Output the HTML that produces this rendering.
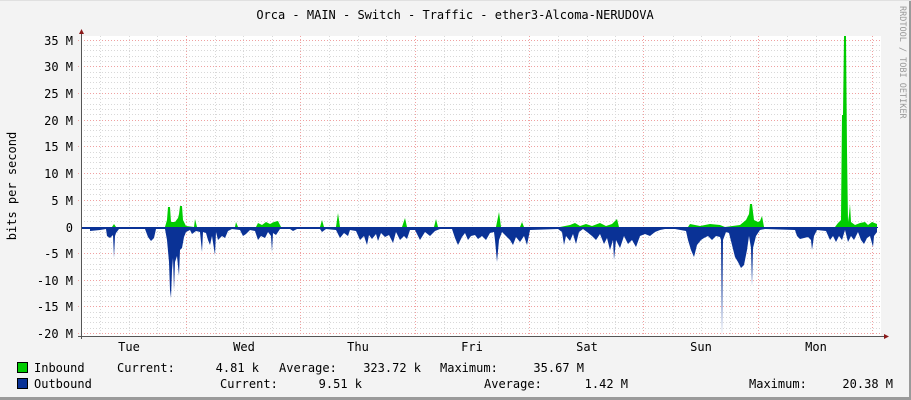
<!DOCTYPE html>
<html><head><meta charset="utf-8"><style>
html,body{margin:0;padding:0;background:#f3f3f3}
svg{display:block}
text{font-family:"DejaVu Sans Mono","Liberation Mono",monospace;fill:#000}
</style></head><body>
<svg width="911" height="400" xmlns="http://www.w3.org/2000/svg">
<rect width="911" height="400" fill="#f3f3f3"/>
<rect x="909" y="0" width="2" height="400" fill="#9a9a9a"/>
<rect x="0" y="397" width="911" height="3" fill="#9a9a9a"/>
<rect x="0" y="0" width="911" height="1" fill="#e0e0e0"/>
<rect x="81" y="36" width="800" height="300" fill="#fff"/>
<g stroke="#d8d8d8" stroke-width="1" stroke-dasharray="1,2">
<line x1="81" x2="881" y1="45.5" y2="45.5"/><line x1="81" x2="881" y1="50.5" y2="50.5"/><line x1="81" x2="881" y1="56.5" y2="56.5"/><line x1="81" x2="881" y1="61.5" y2="61.5"/>
<line x1="81" x2="881" y1="72.5" y2="72.5"/><line x1="81" x2="881" y1="77.5" y2="77.5"/><line x1="81" x2="881" y1="82.5" y2="82.5"/><line x1="81" x2="881" y1="88.5" y2="88.5"/>
<line x1="81" x2="881" y1="98.5" y2="98.5"/><line x1="81" x2="881" y1="104.5" y2="104.5"/><line x1="81" x2="881" y1="109.5" y2="109.5"/><line x1="81" x2="881" y1="114.5" y2="114.5"/>
<line x1="81" x2="881" y1="125.5" y2="125.5"/><line x1="81" x2="881" y1="130.5" y2="130.5"/><line x1="81" x2="881" y1="136.5" y2="136.5"/><line x1="81" x2="881" y1="141.5" y2="141.5"/>
<line x1="81" x2="881" y1="152.5" y2="152.5"/><line x1="81" x2="881" y1="157.5" y2="157.5"/><line x1="81" x2="881" y1="162.5" y2="162.5"/><line x1="81" x2="881" y1="168.5" y2="168.5"/>
<line x1="81" x2="881" y1="178.5" y2="178.5"/><line x1="81" x2="881" y1="184.5" y2="184.5"/><line x1="81" x2="881" y1="189.5" y2="189.5"/><line x1="81" x2="881" y1="194.5" y2="194.5"/>
<line x1="81" x2="881" y1="205.5" y2="205.5"/><line x1="81" x2="881" y1="210.5" y2="210.5"/><line x1="81" x2="881" y1="216.5" y2="216.5"/><line x1="81" x2="881" y1="221.5" y2="221.5"/>
<line x1="81" x2="881" y1="232.5" y2="232.5"/><line x1="81" x2="881" y1="237.5" y2="237.5"/><line x1="81" x2="881" y1="242.5" y2="242.5"/><line x1="81" x2="881" y1="248.5" y2="248.5"/>
<line x1="81" x2="881" y1="258.5" y2="258.5"/><line x1="81" x2="881" y1="264.5" y2="264.5"/><line x1="81" x2="881" y1="269.5" y2="269.5"/><line x1="81" x2="881" y1="274.5" y2="274.5"/>
<line x1="81" x2="881" y1="285.5" y2="285.5"/><line x1="81" x2="881" y1="290.5" y2="290.5"/><line x1="81" x2="881" y1="296.5" y2="296.5"/><line x1="81" x2="881" y1="301.5" y2="301.5"/>
<line x1="81" x2="881" y1="312.5" y2="312.5"/><line x1="81" x2="881" y1="317.5" y2="317.5"/><line x1="81" x2="881" y1="322.5" y2="322.5"/><line x1="81" x2="881" y1="328.5" y2="328.5"/>
<line y1="36" y2="336" x1="100.5" x2="100.5"/><line y1="36" y2="336" x1="129.5" x2="129.5"/><line y1="36" y2="336" x1="157.5" x2="157.5"/>
<line y1="36" y2="336" x1="215.5" x2="215.5"/><line y1="36" y2="336" x1="243.5" x2="243.5"/><line y1="36" y2="336" x1="272.5" x2="272.5"/>
<line y1="36" y2="336" x1="329.5" x2="329.5"/><line y1="36" y2="336" x1="358.5" x2="358.5"/><line y1="36" y2="336" x1="386.5" x2="386.5"/>
<line y1="36" y2="336" x1="444.5" x2="444.5"/><line y1="36" y2="336" x1="472.5" x2="472.5"/><line y1="36" y2="336" x1="501.5" x2="501.5"/>
<line y1="36" y2="336" x1="558.5" x2="558.5"/><line y1="36" y2="336" x1="587.5" x2="587.5"/><line y1="36" y2="336" x1="615.5" x2="615.5"/>
<line y1="36" y2="336" x1="673.5" x2="673.5"/><line y1="36" y2="336" x1="701.5" x2="701.5"/><line y1="36" y2="336" x1="730.5" x2="730.5"/>
<line y1="36" y2="336" x1="787.5" x2="787.5"/><line y1="36" y2="336" x1="816.5" x2="816.5"/><line y1="36" y2="336" x1="844.5" x2="844.5"/>
</g>
<g stroke="#f0a0a0" stroke-width="1" stroke-dasharray="1,2">
<line x1="78" x2="881" y1="40.5" y2="40.5"/><line x1="78" x2="881" y1="66.5" y2="66.5"/><line x1="78" x2="881" y1="93.5" y2="93.5"/><line x1="78" x2="881" y1="120.5" y2="120.5"/>
<line x1="78" x2="881" y1="146.5" y2="146.5"/><line x1="78" x2="881" y1="173.5" y2="173.5"/><line x1="78" x2="881" y1="200.5" y2="200.5"/>
<line x1="78" x2="881" y1="253.5" y2="253.5"/><line x1="78" x2="881" y1="280.5" y2="280.5"/><line x1="78" x2="881" y1="306.5" y2="306.5"/><line x1="78" x2="881" y1="333.5" y2="333.5"/>
<line y1="36" y2="339" x1="186.5" x2="186.5"/><line y1="36" y2="339" x1="300.5" x2="300.5"/><line y1="36" y2="339" x1="415.5" x2="415.5"/><line y1="36" y2="339" x1="529.5" x2="529.5"/>
<line y1="36" y2="339" x1="643.5" x2="643.5"/><line y1="36" y2="339" x1="758.5" x2="758.5"/><line y1="36" y2="339" x1="872.5" x2="872.5"/>
</g>
<path fill="#0a3296" d="M81,227 L81,229 90,229 90,231 100,230 106,229 107,236 110,238 113,235 114,258 115,236 116,233 119,229 145,229 148,237 151,241 154,238 156,229 165,229 167,240 169,262 170,290 171,298 172,270 173,258 174,290 175,262 177,256 179,276 180,250 182,248 184,237 186,232 190,230 192,234 196,231 200,232 202,252 203,232 206,233 208,240 210,245 212,236 215,255 216,232 218,240 222,236 225,238 228,231 232,229 240,230 243,236 246,234 250,230 255,231 258,240 261,236 265,238 268,232 271,236 272,252 273,233 276,235 280,229 290,229 293,231 297,229 320,229 322,232 326,229 336,230 340,238 344,233 348,236 350,230 356,231 360,240 364,236 367,245 369,235 372,239 376,234 378,241 381,233 385,237 389,235 393,243 396,232 400,240 404,236 407,239 410,230 415,230 420,240 425,232 430,236 435,231 440,229 452,229 455,238 458,245 462,237 465,233 468,240 471,236 475,235 478,239 482,236 486,240 490,233 494,232 495,240 497,262 499,240 502,232 506,236 510,240 513,245 516,237 520,242 524,236 527,245 530,230 558,229 562,232 564,245 566,236 570,241 573,234 576,244 579,232 583,229 587,232 592,236 596,240 600,234 604,244 607,238 610,250 613,240 614,260 616,240 620,248 624,236 628,244 632,240 636,247 640,236 645,234 650,236 655,232 660,230 665,229 675,229 686,231 688,240 691,250 694,257 697,245 701,240 704,238 708,236 712,240 716,236 720,237 721,240 722,336 723,240 726,232 729,233 732,245 735,257 738,262 741,268 744,265 747,250 749,236 751,248 752,286 753,248 756,236 760,230 765,229 795,230 797,236 800,239 804,238 808,237 811,240 812,250 814,236 817,230 826,231 830,240 833,236 836,242 839,236 842,240 845,230 848,242 851,236 854,240 858,232 861,240 864,244 867,238 870,236 873,247 874,236 877,232 877,227 Z"/>
<path fill="#00cc00" d="M106,227 L112,227 114,224 116,227 165,227 167,220 168,207 170,207 171,222 175,222 178,218 179,214 180,206 182,206 183,220 186,226 194,227 195,219 197,227 235,227 236,222 238,227 256,227 258,223 262,225 266,222 270,224 274,222 278,221 281,227 320,227 322,220 324,227 336,227 338,213 340,227 402,227 405,218 407,227 434,227 436,219 438,227 496,227 499,212 501,227 520,227 522,222 524,227 560,227 570,225 575,223 580,226 586,224 592,226 600,223 606,226 612,224 617,219 619,227 640,227 688,227 690,224 700,226 710,224 720,225 725,227 740,225 746,220 749,214 750,204 752,204 754,220 758,222 760,221 762,216 764,227 835,227 838,223 841,220 842,115 843,115 844,36 846,36 847,150 848,222 849,215 850,204 851,222 855,225 860,223 865,222 868,225 872,222 877,224 877,227 Z"/>
<line x1="81" x2="878" y1="227.5" y2="227.5" stroke="#0a3296" stroke-width="1"/>
<line x1="81.5" y1="32" x2="81.5" y2="339" stroke="#555"/>
<line x1="78" y1="336.5" x2="884" y2="336.5" stroke="#555"/>
<polygon points="79,34 84,34 81.5,29" fill="#8b1a1a"/>
<polygon points="884,334 884,339 889,336.5" fill="#8b1a1a"/>
<g font-size="12" text-anchor="end">
<text x="73" y="45">35 M</text><text x="73" y="71">30 M</text><text x="73" y="98">25 M</text><text x="73" y="125">20 M</text>
<text x="73" y="151">15 M</text><text x="73" y="178">10 M</text><text x="73" y="205">5 M</text><text x="73" y="232">0</text>
<text x="73" y="258">-5 M</text><text x="73" y="285">-10 M</text><text x="73" y="311">-15 M</text><text x="73" y="338">-20 M</text>
</g>
<g font-size="12" text-anchor="middle">
<text x="129" y="351">Tue</text><text x="244" y="351">Wed</text><text x="358" y="351">Thu</text><text x="472" y="351">Fri</text>
<text x="587" y="351">Sat</text><text x="701" y="351">Sun</text><text x="816" y="351">Mon</text>
<text x="455" y="19">Orca - MAIN - Switch - Traffic - ether3-Alcoma-NERUDOVA</text>
<text transform="translate(16,186) rotate(-90)">bits per second</text>
</g>
<text transform="translate(900,6) rotate(90)" font-size="8.5" style="fill:#999">RRDTOOL / TOBI OETIKER</text>
<rect x="17.5" y="362.5" width="10" height="10" fill="#00cc00" stroke="#000"/>
<rect x="17.5" y="378.5" width="10" height="10" fill="#0a3296" stroke="#000"/>
<g font-size="12">
<text x="34" y="372">Inbound</text>
<text x="117" y="372">Current:</text>
<text x="259" y="372" text-anchor="end">4.81 k</text>
<text x="279" y="372">Average:</text>
<text x="421" y="372" text-anchor="end">323.72 k</text>
<text x="440" y="372">Maximum:</text>
<text x="584" y="372" text-anchor="end">35.67 M</text>
<text x="34" y="388">Outbound</text>
<text x="220" y="388">Current:</text>
<text x="362" y="388" text-anchor="end">9.51 k</text>
<text x="484" y="388">Average:</text>
<text x="628" y="388" text-anchor="end">1.42 M</text>
<text x="749" y="388">Maximum:</text>
<text x="893" y="388" text-anchor="end">20.38 M</text>
</g>
</svg>
</body></html>
